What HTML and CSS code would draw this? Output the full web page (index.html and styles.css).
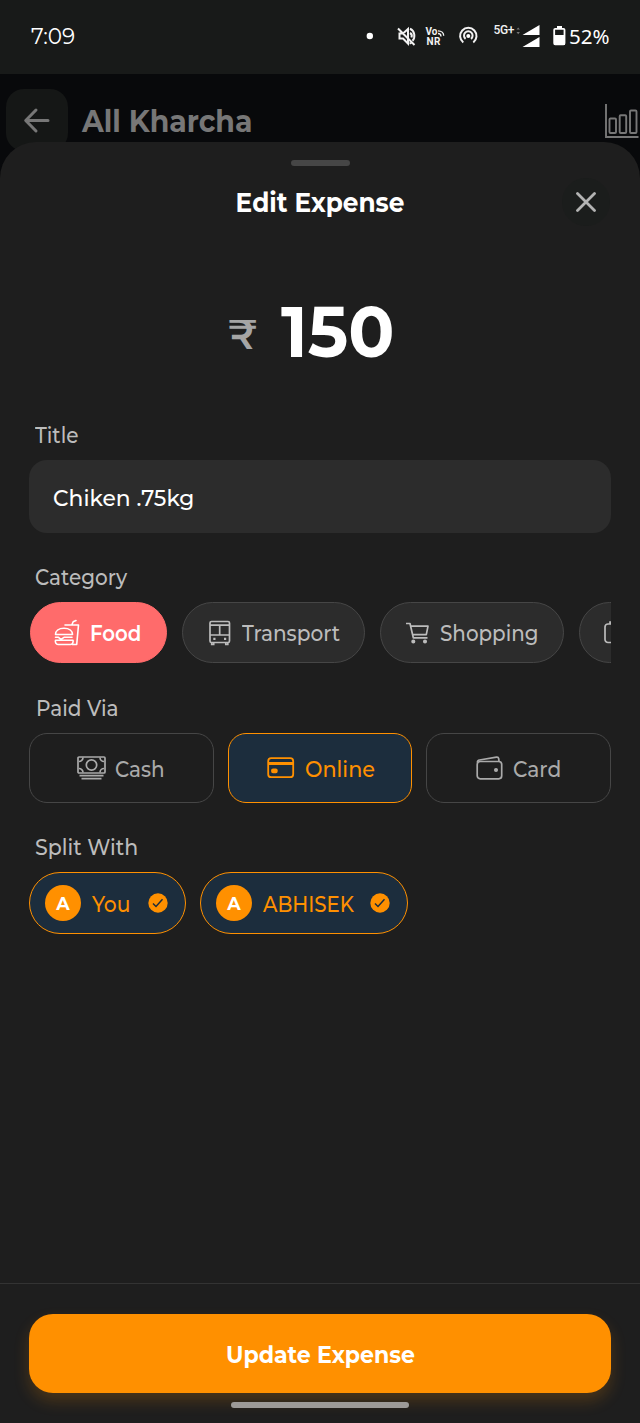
FILE: index.html
```html
<!DOCTYPE html>
<html lang="en">
<head>
<meta charset="utf-8">
<title>Edit Expense</title>
<link rel="stylesheet" href="styles.css">
</head>
<body>
<div class="screen">
  <div class="status">
    <span class="time">7:09</span>
    <svg class="status-icons" width="180" height="30" viewBox="360 21 180 30">
      <circle cx="369.800" cy="36" r="3.200" fill="#fff"/>
      <g fill="none" stroke="#f2f2f2" stroke-width="2">
        <path d="M398 28.500l16.500 16.500M399.500 33.500h3.500l5-4.500v14.500l-5-5h-3.500zM410 28.700c5 2 5.500 9 2.500 12M410 33c2 1 2 3 1.500 4.500M409.500 43.500l2-1"/>
        <path d="M463.300 42.500a8.200 8.200 0 1 1 10 0M465.600 38.900a4.300 4.300 0 1 1 5.400 0"/>
        <path d="M438 33.500c2 0 3 1.200 3 3M438 30.800c3.500 0 5.700 2.200 5.700 5" stroke-width="1.300"/>
      </g>
      <circle cx="468.300" cy="36" r="2" fill="#fff"/>
      <text x="425.500" y="34.800" class="net net-small" textLength="12">Vo</text>
      <text x="426.500" y="44.500" class="net net-small" textLength="14">NR</text>
      <text x="493.500" y="34" class="net" textLength="21">5G+</text>
      <path d="M516.500 29.500l1.700-2 1.700 2zM516.500 32l1.700 2.200 1.700-2.200z" fill="#777"/>
      <path d="M522.500 35l17-10v10zM522.500 47l17-10v10z" fill="#fff"/>
    </svg>
    <svg class="battery" width="13" height="20" viewBox="0 0 13 20"><path d="M4 0h5v2.500h-5z" fill="#fff"/><rect x="1.200" y="2.800" width="10.300" height="15.500" rx="1" fill="none" stroke="#fff" stroke-width="1.800"/><path d="M1 9h11v10H1z" fill="#fff"/></svg>
    <span class="percent">52%</span>
  </div>

  <div class="app-header">
    <div class="back"><svg width="28" height="28" viewBox="0 0 28 28"><path d="M25 14.500H3.500M13 4L2.700 14.500l10.300 10.500" fill="none" stroke="#777" stroke-width="3" stroke-linecap="round" stroke-linejoin="round"/></svg></div>
    <span class="page-title">All Kharcha</span>
    <svg class="chart" width="35" height="36" viewBox="0 0 35 36" fill="none" stroke="#777" stroke-width="1.900"><path d="M2 0v33h32.500"/><rect x="5.500" y="14.500" width="6.500" height="14.500" rx="1"/><rect x="15.700" y="11.200" width="6.500" height="17.800" rx="1"/><rect x="26" y="6.500" width="6.500" height="22.500" rx="1"/></svg>
  </div>

  <div class="sheet">
    <div class="handle"></div>
    <div class="sheet-head">
      <span class="sheet-title">Edit Expense</span>
      <div class="close"><svg width="20" height="20" viewBox="0 0 20 20"><path d="M1.500 1.500l17 17M18.500 1.500l-17 17" stroke="#b3b3b3" stroke-width="2.800" stroke-linecap="round"/></svg></div>
    </div>
    <div class="amount"><span class="rupee">₹</span><span class="value">150</span></div>

    <div class="label"><span class="l-title">Title</span></div>
    <div class="input"><span class="input-text">Chiken .75kg</span></div>

    <div class="label label-category"><span class="l-category">Category</span></div>
    <div class="chips">
      <div class="chip chip-food">
        <svg width="26" height="28" viewBox="0 0 26 28" fill="none" stroke="#fff" stroke-width="1.600" stroke-linecap="round" stroke-linejoin="round"><path d="M11 6h13.500l-1.800 19.500h-4.500M18 5.500l1.200-2.800 2.800-1.200M1.500 15.500c0-3.500 3-6.300 8.500-6.300s8.500 2.800 8.500 6.300zM1.500 18.300h3l2.500 2 3-2h8M1.500 21.300h17.500c.5 2-.5 4.200-2.500 4.200H4c-2 0-3-2.200-2.500-4.200z"/></svg>
        <span class="t-food">Food</span>
      </div>
      <div class="chip chip-transport">
        <svg width="22" height="26" viewBox="0 0 22 26" fill="none" stroke="#bcbcbc" stroke-width="1.700"><rect x="1" y="1.500" width="19.500" height="21" rx="1.500"/><path d="M1 5.200h19.500M1 15h19.500M10.700 5.200V15M2.700 22.500v2h2v-2M16.800 22.500v2h2v-2"/><path d="M4.300 18.800h2.200M15 18.800h2.200" stroke-width="2.200"/></svg>
        <span class="t-transport">Transport</span>
      </div>
      <div class="chip chip-shopping">
        <svg width="24" height="22" viewBox="0 0 24 22" fill="none" stroke="#bcbcbc" stroke-width="1.700" stroke-linejoin="round"><path d="M0 1.500h4l3.300 14.300h14.200M4.700 4.200H22l-1.700 8.500H6.700"/><circle cx="7.300" cy="19.500" r="1.200" fill="#bcbcbc"/><circle cx="19" cy="19.500" r="1.200" fill="#bcbcbc"/></svg>
        <span class="t-shopping">Shopping</span>
      </div>
      <div class="chip chip-more">
        <svg width="26" height="24" viewBox="0 0 26 24" fill="none" stroke="#bcbcbc" stroke-width="1.700"><rect x="1" y="3" width="23" height="18.500" rx="3"/><path d="M6 3V1h13v2"/></svg>
      </div>
    </div>

    <div class="label label-paid"><span class="l-paid">Paid Via</span></div>
    <div class="methods">
      <div class="method method-cash">
        <svg width="29" height="24" viewBox="0 0 29 24" fill="none" stroke="#aaa" stroke-width="1.700"><rect x="1" y="1" width="27" height="16" rx="1"/><circle cx="14.500" cy="9" r="5.200"/><path d="M2 5.500c2 0 4-1.500 4-4M27 5.500c-2 0-4-1.500-4-4M2 12.500c2 0 4 1.500 4 4M27 12.500c-2 0-4 1.500-4 4M2.500 19.700h24M4.500 22.700h20"/></svg>
        <span class="t-cash">Cash</span>
      </div>
      <div class="method method-online">
        <svg width="28" height="22" viewBox="0 0 28 22" fill="none" stroke="#ff9000" stroke-width="1.800"><rect x="1.200" y="1.200" width="25" height="19" rx="3"/><path d="M1 6.500h25" stroke-width="3"/><rect x="5" y="12.300" width="4.800" height="3" rx="1" fill="#ff9000"/></svg>
        <span class="t-online">Online</span>
      </div>
      <div class="method method-card">
        <svg width="28" height="24" viewBox="0 0 28 24" fill="none" stroke="#aaa" stroke-width="1.700" stroke-linejoin="round"><rect x="1.200" y="5.500" width="24.500" height="17.300" rx="3"/><path d="M1.500 6.500c-.3-1.500.7-2.300 2-2.500L20.500 1.200c1.500-.2 2 .3 2.200 1.500l.3 2.800"/><circle cx="20" cy="14" r="1.200" fill="#aaa"/></svg>
        <span class="t-card">Card</span>
      </div>
    </div>

    <div class="label label-split"><span class="l-split">Split With</span></div>
    <div class="people">
      <div class="person person-you">
        <span class="avatar">A</span><span class="name t-you">You</span>
        <svg width="20" height="20" viewBox="0 0 20 20"><circle cx="10" cy="10" r="9.700" fill="#ff9000"/><path d="M5 10.500l3 3 6.500-7.200" fill="none" stroke="#1c2d3d" stroke-width="1.500"/></svg>
      </div>
      <div class="person person-abhisek">
        <span class="avatar">A</span><span class="name t-abhisek">ABHISEK</span>
        <svg width="20" height="20" viewBox="0 0 20 20"><circle cx="10" cy="10" r="9.700" fill="#ff9000"/><path d="M5 10.500l3 3 6.500-7.200" fill="none" stroke="#1c2d3d" stroke-width="1.500"/></svg>
      </div>
    </div>

    <div class="footer">
      <div class="update"><span class="update-text">Update Expense</span></div>
      <div class="home"></div>
    </div>
  </div>
</div>
</body>
</html>
```
FILE: styles.css
```css
* { box-sizing: border-box; }
body {
  margin: 0;
  background: #1e1e1e;
  font-family: Montserrat, Inter, "Open Sans", sans-serif;
  font-weight: 500;
  color: #bcbcbc;
}
svg { display: block; flex: none; }
span { display: block; white-space: nowrap; transform-origin: 0 50%; }
.screen { width: 640px; height: 1423px; background: #08090b; overflow: hidden; display: flex; flex-direction: column; }

.status { height: 74px; flex: none; background: #181a19; display: flex; align-items: center; padding: 0 0 2px 31px; color: #fff; }
.time { font-size: 21.500px; font-weight: 400; width: 329px; line-height: 28px; }
.battery { margin-left: 13px; }
.percent { font-family: "Noto Sans", sans-serif; font-size: 20.500px; font-weight: 400; margin-left: 3px; line-height: 28px; }
.net { font: 500 12px Roboto, sans-serif; fill: #f2f2f2; }
.net-small { font-size: 10px; font-weight: 700; }

.app-header { height: 68px; flex: none; display: flex; align-items: flex-start; padding: 15px 1px 0 6px; }
.back { width: 62px; height: 62px; border-radius: 18px; background: #151716; display: flex; align-items: center; padding-left: 17px; }
.page-title { margin-left: 14px; line-height: 65px; font-size: 30px; font-weight: 700; transform: scaleX(.944); color: #777; }
.chart { margin: 15px 0 0 auto; }

.sheet { flex: 1; position: relative; background: #1e1e1e; border-radius: 36px 36px 0 0; display: flex; flex-direction: column; padding-top: 18px; }
.handle { width: 59px; height: 6px; border-radius: 3px; background: #464646; margin-left: 290.500px; flex: none; }
.sheet-head { display: grid; grid-template-columns: 48px 1fr 48px; grid-template-rows: 48px; align-items: center; margin: 12px 30px 0; height: 48px; }
.sheet-title { grid-column: 2; text-align: center; font-size: 26.500px; font-weight: 700; transform: scaleX(.935); transform-origin: 50% 50%; color: #fff; line-height: 48px; padding-top: 1px; }
.close { width: 48px; height: 48px; border-radius: 50%; background: #1b1d1c; display: flex; align-items: center; justify-content: center; }
.amount { height: 82px; margin-top: 64px; display: flex; align-items: center; padding-left: 228px; }
.rupee { width: 52.500px; font-size: 41.500px; font-weight: 600; color: #a5a5a5; line-height: 82px; padding-top: 6px; }
.value { font-size: 72px; font-weight: 700; transform: scaleX(.945); color: #fff; line-height: 82px; }

.label { height: 26px; line-height: 26px; margin: 50px 0 0 35px; font-size: 21.500px; font-weight: 500; }
.l-title { transform: scaleX(.935); }
.l-category { transform: scaleX(.93); }
.l-paid { transform: scaleX(.935); margin-left: 1px; }
.l-split { transform: scaleX(.955); }
.input { height: 73px; margin: 12px 29px 0; border-radius: 18px; background: #2c2c2c; padding: 2px 0 0 24px; display: flex; align-items: center; color: #fff; font-size: 22.500px; font-weight: 500; }
.input-text { transform: scaleX(.97); }
.label-category { margin-top: 31px; }
.chips { display: flex; gap: 15px; height: 61px; margin: 12px 29px 0 30px; overflow: hidden; flex: none; }
.chip { flex: none; height: 61px; border-radius: 31px; border: 1px solid #464646; background: #2c2c2c; display: flex; align-items: center; font-size: 21.500px; font-weight: 500; padding-top: 1px; }
.chip svg { margin-top: -1px; }
.chip-food { width: 137px; background: #ff6b6b; border-color: #ff6b6b; color: #fff; font-weight: 600; padding-left: 23px; gap: 10px; }
.chip-transport { width: 183px; padding-left: 26px; gap: 11px; }
.chip-shopping { width: 184px; padding-left: 25px; gap: 10px; }
.chip-more { width: 150px; padding-left: 24px; }
.t-food { transform: scaleX(.92); }
.t-transport { transform: scaleX(.935); }
.t-shopping { transform: scaleX(.925); }

.label-paid { margin-top: 32px; }
.methods { display: grid; grid-template-columns: repeat(3, 1fr); gap: 14px; height: 70px; margin: 12px 29px 0; flex: none; }
.method { border: 1px solid #464646; border-radius: 18px; display: flex; align-items: center; font-size: 21.500px; color: #aaa; padding-top: 1px; }
.method svg { margin-top: -2px; }
.method-cash { padding-left: 47px; gap: 9px; }
.method-online { padding-left: 38px; gap: 10px; color: #ff9000; background: #1c2d3d; border: 1.500px solid #ff9000; }
.method-card { padding-left: 49px; gap: 9px; }
.t-cash { transform: scaleX(.93); }
.t-online { transform: scaleX(.965); }
.t-card { transform: scaleX(.94); }

.label-split { margin-top: 31px; }
.people { display: flex; gap: 14px; height: 62px; margin: 12px 29px 0; flex: none; }
.person { border: 1.500px solid #ff9000; border-radius: 31px; background: #1c2d3d; color: #ff9000; display: flex; align-items: center; padding: 0 17px 0 15px; font-size: 21.500px; }
.person-you { width: 157px; }
.person-abhisek { width: 208px; }
.person svg { margin: -1px 0 0 auto; }
.avatar { width: 36px; height: 36px; border-radius: 50%; background: #ff9000; color: #fff; font-size: 17.500px; font-weight: 700; line-height: 37px; text-align: center; flex: none; }
.name { margin-left: 11px; width: 0; padding-top: 1px; }
.t-you { transform: scaleX(.94); }
.t-abhisek { transform: scaleX(1); }
.name.t-you { width: 40px; }
.name.t-abhisek { width: 90px; transform: scaleX(.915); }

.footer { margin-top: auto; height: 140px; flex: none; border-top: 1px solid #333; padding: 30px 29px 0; }
.update { height: 79px; border-radius: 24px; background: #ff9000; box-shadow: 0 8px 16px rgba(255, 144, 0, .2); color: #fff; font-size: 23.500px; font-weight: 700; display: flex; align-items: center; justify-content: center; padding-top: 2px; }
.update-text { transform: scaleX(.94); transform-origin: 50% 50%; }
.home { width: 178px; height: 6px; border-radius: 3px; background: #9d9a98; margin: 9px auto 0; position: relative; }
```
